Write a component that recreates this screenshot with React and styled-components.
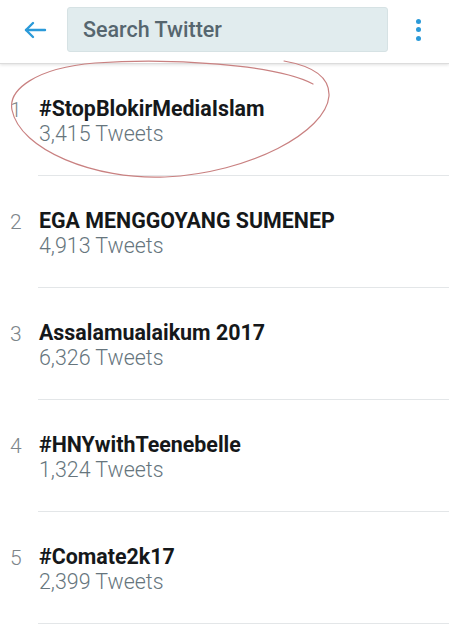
import styled, { createGlobalStyle } from 'styled-components'

const GlobalStyle = createGlobalStyle`
  html, body {
    margin: 0;
    padding: 0;
    background: #fff;
    font-family: Roboto, "Liberation Sans", sans-serif;
  }
`

const trends = [
  { name: '#StopBlokirMediaIslam', count: '3,415' },
  { name: 'EGA MENGGOYANG SUMENEP', count: '4,913' },
  { name: 'Assalamualaikum 2017', count: '6,326' },
  { name: '#HNYwithTeenebelle', count: '1,324' },
  { name: '#Comate2k17', count: '2,399' },
]

function App() {
  return (
    <Page>
      <GlobalStyle />
      <Header>
        <IconButton aria-label="back">
          <svg width="24" height="24" viewBox="0 0 24 24" fill="none" stroke="#2b9ad9" strokeWidth="2.4" strokeLinecap="round" strokeLinejoin="round">
            <path d="M22 12H3" />
            <path d="M10 5L3 12l7 7" />
          </svg>
        </IconButton>
        <SearchBox>Search Twitter</SearchBox>
        <MenuButton aria-label="more">
          <Dot />
          <Dot />
          <Dot />
        </MenuButton>
      </Header>

      <List>
        {trends.map((t, i) => (
          <Row key={t.name}>
            <Rank>{i + 1}</Rank>
            <Body>
              <Title>{t.name}</Title>
              <Count>{t.count} Tweets</Count>
            </Body>
          </Row>
        ))}
      </List>

      {/* hand drawn circle around the first trend */}
      <Scribble width="449" height="200" viewBox="0 0 449 200">
        <path
          d="M313 84 C 275 64, 170 58, 95 63 C 35 68, 8 90, 12 110 C 20 150, 95 180, 165 177 C 250 173, 326 132, 329 96 C 330 76, 312 66, 284 61"
          fill="none"
          stroke="#c98181"
          strokeWidth="1.2"
          strokeLinecap="round"
        />
      </Scribble>
    </Page>
  )
}

const Page = styled.div`
  position: relative;
  width: 449px;
  height: 640px;
  overflow: hidden;
  background: #fff;
`

const Header = styled.div`
  height: 64px;
  display: flex;
  align-items: flex-start;
  padding-top: 7px;
  box-sizing: border-box;
  border-bottom: 1px solid #dcdcdc;
  box-shadow: 0 1px 3px rgba(0, 0, 0, 0.12);
  position: relative;
  z-index: 1;
  background: #fff;
`

const IconButton = styled.div`
  width: 67px;
  height: 45px;
  display: flex;
  align-items: center;
  justify-content: center;
  padding-left: 2px;
  box-sizing: border-box;
`

const SearchBox = styled.div`
  width: 321px;
  height: 45px;
  box-sizing: border-box;
  background: #e1ecee;
  border: 1px solid #d6e2e4;
  border-radius: 3px;
  padding-left: 15px;
  display: flex;
  align-items: center;
  font-size: 21.5px;
  font-weight: 500;
  color: #56666f;
`

const MenuButton = styled.div`
  flex: 1;
  height: 45px;
  display: flex;
  flex-direction: column;
  align-items: center;
  justify-content: center;
  gap: 3.5px;
`

const Dot = styled.span`
  width: 5px;
  height: 5px;
  border-radius: 50%;
  background: #2b9ad9;
`

const List = styled.div`
  display: flex;
  flex-direction: column;
`

const Row = styled.div`
  display: flex;
`

const Rank = styled.div`
  width: 28px;
  padding-left: 10px;
  padding-top: 34px;
  font-size: 21px;
  line-height: 24px;
  font-weight: 300;
  color: #7d858a;
`

const Body = styled.div`
  flex: 1;
  padding: 33px 0 29px 1px;
  border-bottom: 1px solid #e3e6e8;
`

const Title = styled.div`
  font-size: 21.4px;
  line-height: 24px;
  font-weight: 700;
  color: #15181a;
`

const Count = styled.div`
  font-size: 21.4px;
  line-height: 24px;
  font-weight: 300;
  color: #66757d;
  margin-top: 1px;
`

const Scribble = styled.svg`
  position: absolute;
  left: 0;
  top: 0;
  pointer-events: none;
  z-index: 2;
`

export default App
